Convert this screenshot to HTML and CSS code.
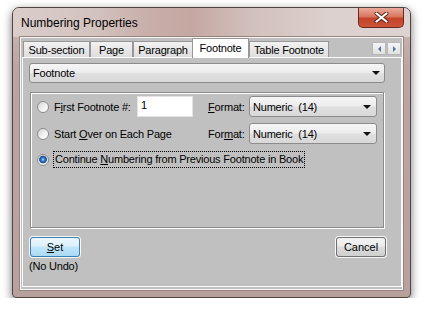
FILE: index.html
```html
<!DOCTYPE html>
<html lang="en">

<head>
    <meta charset="UTF-8">
    <meta name="viewport" content="width=device-width, initial-scale=1.0">
    <title>Numbering Properties</title>
    <link rel="stylesheet" href="styles.css">
</head>

<body>
    <div class="window">
        <div class="titlebar">
            <span class="title">Numbering Properties</span>
            <div class="close">
                <svg width="15" height="11" viewBox="0 0 15 11">
                    <path d="M2.5 1.5 L12.5 9.5 M12.5 1.5 L2.5 9.5" stroke="#5a2418" stroke-width="4" stroke-linecap="round"/>
                    <path d="M2.5 1.5 L12.5 9.5 M12.5 1.5 L2.5 9.5" stroke="#fff" stroke-width="2.2" stroke-linecap="round"/>
                </svg>
            </div>
        </div>
        <div class="client">
            <div class="tabs">
                <span class="tab t-sub">Sub-section</span>
                <span class="tab t-page">Page</span>
                <span class="tab t-para">Paragraph</span>
                <span class="tab t-foot active">Footnote</span>
                <span class="tab t-table">Table Footnote</span>
                <div class="scroller">
                    <span class="arr left"></span>
                    <span class="arr right"></span>
                </div>
            </div>
            <div class="panel">
                <div class="combo wide">Footnote<i class="caret"></i></div>
                <div class="group">
                    <div class="row">
                        <div class="lead">
                            <span class="radio"></span>
                            <span>F<u>i</u>rst Footnote #:</span>
                            <span class="field">1</span>
                        </div>
                        <span class="fmt"><u>F</u>ormat:</span>
                        <div class="combo small">Numeric&nbsp; (14)<i class="caret"></i></div>
                    </div>
                    <div class="row">
                        <div class="lead">
                            <span class="radio"></span>
                            <span>Start <u>O</u>ver on Each Page</span>
                        </div>
                        <span class="fmt">For<u>m</u>at:</span>
                        <div class="combo small">Numeric&nbsp; (14)<i class="caret"></i></div>
                    </div>
                    <div class="row last">
                        <span class="radio on"></span>
                        <span class="focus">Continue <u>N</u>umbering from Previous Footnote in Book</span>
                    </div>
                </div>
                <div class="actions">
                    <div class="set-col">
                        <button class="btn primary"><u>S</u>et</button>
                        <span class="note">(No Undo)</span>
                    </div>
                    <button class="btn">Cancel</button>
                </div>
            </div>
        </div>
    </div>
</body>

</html>
```

FILE: styles.css
```css
* {
    margin: 0;
    padding: 0;
    box-sizing: border-box;
}

body {
    background: #fff;
    font-family: "Liberation Sans", Arial, sans-serif;
    font-size: 11px;
    letter-spacing: -0.2px;
    color: #000;
}

/* window frame */
.window {
    width: 399px;
    height: 291px;
    margin: 7px 0 0 12px;
    padding: 0 7px 7px;
    border: 1px solid #4e4543;
    border-radius: 7px 7px 4px 4px;
    background: linear-gradient(#cdbcb8, #bba5a0 60px, #b8a19c);
    box-shadow: 0 3px 10px rgba(0, 0, 0, .55);
    display: flex;
    flex-direction: column;
    overflow: hidden;
}

.titlebar {
    height: 29px;
    margin: 0 -7px;
    padding: 0 7px 0 8px;
    display: flex;
    align-items: center;
    background: linear-gradient(90deg, #dacdca 0%, #d3c3bf 20%, #c8ada8 35%, #c5a7a1 45%, #d2c0bc 60%, #dcd1ce 80%, #ddd3d0 100%);
}

.title {
    font-size: 12px;
    letter-spacing: 0;
}

.close {
    margin-left: auto;
    margin-right: -1px;
    align-self: flex-start;
    width: 46px;
    height: 20px;
    border: 1px solid #6b2a20;
    border-top: none;
    border-radius: 0 0 5px 5px;
    background: linear-gradient(#e9ab9c, #d9775f 45%, #c4442b 55%, #cc5439);
    display: flex;
    align-items: center;
    justify-content: center;
}

.client {
    flex: 1;
    background: #c0c0c0;
    border: 1px solid #f6f4f4;
    box-shadow: 0 0 0 1px #97837f;
    padding: 0 0 2px 1px;
    display: flex;
    flex-direction: column;
}

/* tabs */
.tabs {
    height: 19px;
    padding-left: 1px;
    display: flex;
    align-items: flex-end;
}

.tab {
    height: 16px;
    padding-top: 1px;
    line-height: 14px;
    text-align: center;
    border: 1px solid #979797;
    border-bottom: none;
    background: linear-gradient(#f2f2f2, #dedede);
}

.tab.active {
    height: 20px;
    padding-top: 2px;
    margin-bottom: -1px;
    margin-left: -1px;
    background: #fff;
    position: relative;
    z-index: 1;
}

.t-sub { width: 67px; }
.t-page { width: 43px; }
.t-para { width: 60px; }
.t-foot { width: 57px; }
.t-table { width: 80px; }

.scroller {
    margin-left: auto;
    margin-right: 1px;
    margin-top: 4px;
    align-self: flex-start;
    display: flex;
    gap: 1px;
}

.arr {
    width: 14px;
    height: 13px;
    border: 1px solid #b7b7b7;
    background: linear-gradient(#f5f5f5, #e1e1e1);
    display: flex;
    align-items: center;
    justify-content: center;
}

.arr::before {
    content: "";
    border-top: 3px solid transparent;
    border-bottom: 3px solid transparent;
}

.arr.left::before {
    border-right: 3px solid #56739f;
}

.arr.right::before {
    border-left: 3px solid #56739f;
}

.panel {
    flex: 1;
    border: 1px solid #fbfbfb;
    padding: 5px 16px 0 6px;
    display: flex;
    flex-direction: column;
}

/* combo boxes */
.combo {
    height: 20px;
    padding-left: 3px;
    line-height: 18px;
    border: 1px solid #8c8c8c;
    border-radius: 3px;
    background: linear-gradient(#f6f6f6, #ececec 48%, #e0e0e0 52%, #d8d8d8);
    display: flex;
    align-items: center;
}

.combo.small {
    width: 128px;
    height: 21px;
}

.caret {
    margin-left: auto;
    margin-right: 4px;
    border-left: 4px solid transparent;
    border-right: 4px solid transparent;
    border-top: 4px solid #111;
}

.combo.small .caret {
    margin-right: 5px;
}

/* group box */
.group {
    height: 136px;
    margin: 9px 1px 0 1px;
    padding: 3px 0 0 6px;
    border: 1px solid #8b8b8b;
    box-shadow: inset 1px 1px 0 #fff, 1px 1px 0 #fff;
}

.row {
    height: 21px;
    margin-bottom: 6px;
    display: flex;
    align-items: center;
}

.row.last {
    height: 19px;
}

.lead {
    width: 156px;
    display: flex;
    align-items: center;
}

.radio {
    flex: none;
    width: 12px;
    height: 12px;
    margin-right: 5px;
    border: 1px solid #8b8c8c;
    border-radius: 50%;
    background: linear-gradient(135deg, #d4d4d4, #f4f4f4 60%, #fff);
}

.radio.on {
    margin-right: 4px;
    background: radial-gradient(circle at 50% 45%, #a8dcfb 0, #3b86d1 1.6px, #1a4f95 3px, #2c5f9c 3.6px, #e9e9e9 4.2px, #fafafa 6px);
}

.field {
    margin-left: auto;
    width: 56px;
    height: 21px;
    padding-left: 3px;
    line-height: 16px;
    background: #fff;
    border: 1px solid #e3e3e3;
}

.fmt {
    width: 41px;
    margin-left: 15px;
}

.focus {
    padding: 0 1px;
    line-height: 15px;
    border: 1px dotted #000;
}

/* buttons */
.actions {
    margin: 9px -1px 0 1px;
    display: flex;
    justify-content: space-between;
    align-items: flex-start;
}

.set-col {
    display: flex;
    flex-direction: column;
}

.btn {
    width: 50px;
    height: 20px;
    font: inherit;
    color: #000;
    border: 1px solid #707070;
    border-radius: 3px;
    background: linear-gradient(#f3f3f3, #ebebeb 45%, #dddddd 50%, #cfcfcf);
    box-shadow: 0 0 0 1px rgba(255, 255, 255, .85);
}

.btn.primary {
    border-color: #3c7fb1;
    background: linear-gradient(#ebf7fd, #dcf1fc 45%, #c2e7fb 50%, #abd9f3);
}

.note {
    margin-top: 3px;
    margin-left: -1px;
}
```
